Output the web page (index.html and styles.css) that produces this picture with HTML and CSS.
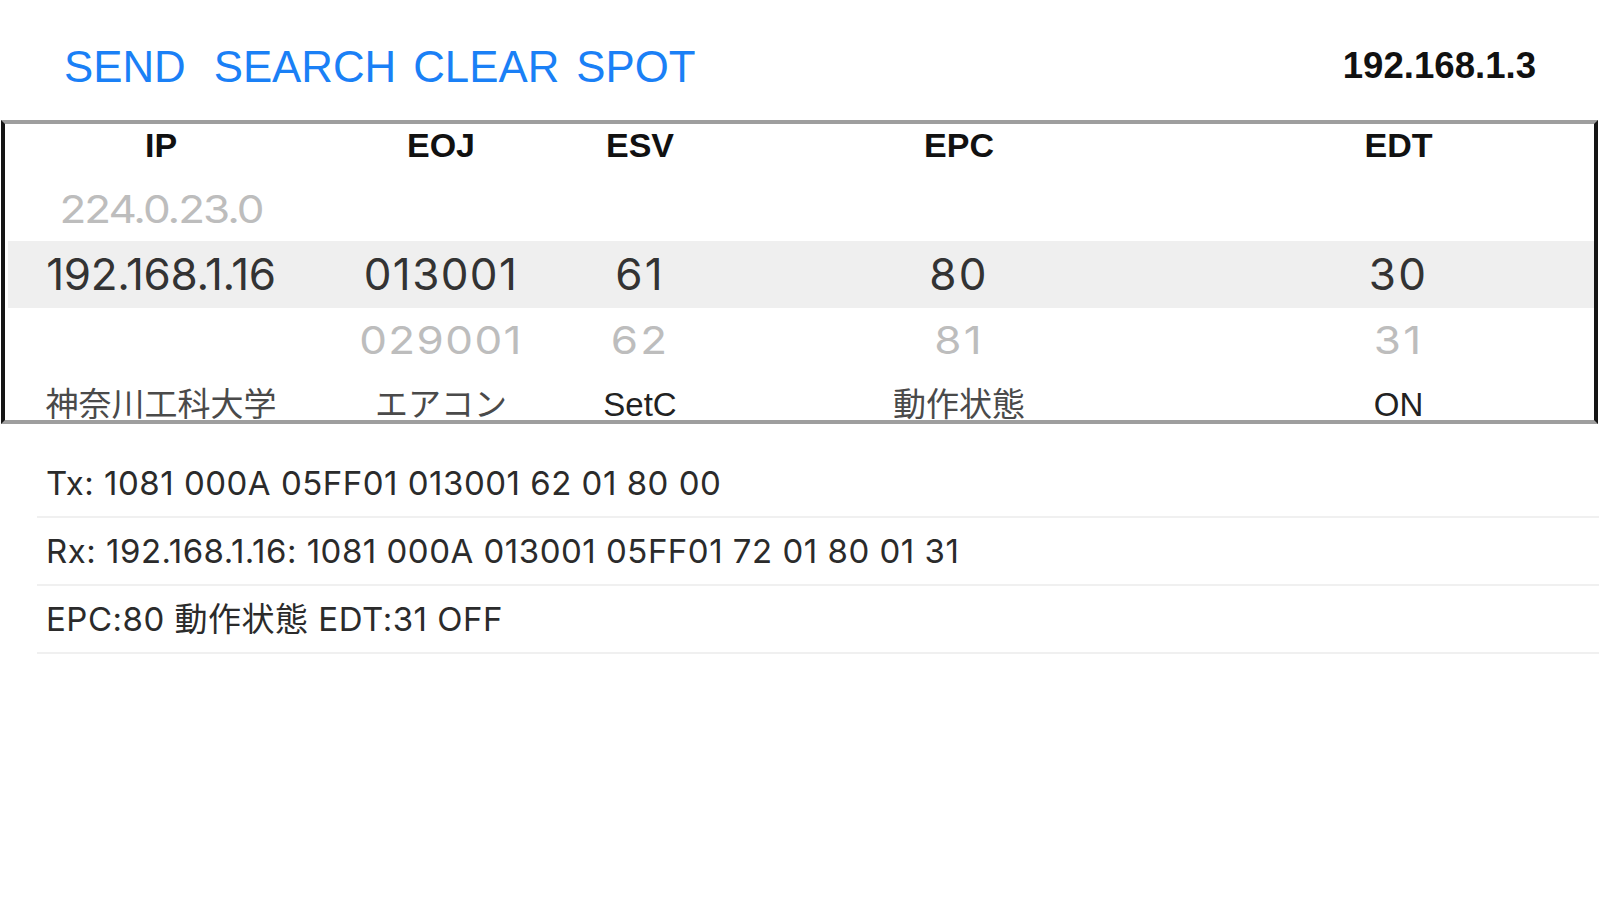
FILE: index.html
```html
<!DOCTYPE html>
<html lang="ja">
<head>
<meta charset="utf-8">
<title>ECHONET Lite Controller</title>
<link rel="stylesheet" href="styles.css">
</head>
<body>
<div class="app">
  <header class="toolbar">
    <nav class="actions">
      <button class="action action-send" type="button">SEND</button>
      <button class="action" type="button">SEARCH</button>
      <button class="action" type="button">CLEAR</button>
      <button class="action" type="button">SPOT</button>
    </nav>
    <div class="host">192.168.1.3</div>
  </header>

  <section class="picker">
    <div class="prow head">
      <div class="cell">IP</div>
      <div class="cell">EOJ</div>
      <div class="cell">ESV</div>
      <div class="cell">EPC</div>
      <div class="cell">EDT</div>
    </div>
    <div class="prow dim">
      <div class="cell ip"><span class="val">224.0.23.0</span></div>
      <div class="cell"></div>
      <div class="cell"></div>
      <div class="cell"></div>
      <div class="cell"></div>
    </div>
    <div class="prow sel">
      <div class="cell ip"><span class="val">192.168.1.16</span></div>
      <div class="cell eoj"><span class="val">013001</span></div>
      <div class="cell num"><span class="val">61</span></div>
      <div class="cell num"><span class="val">80</span></div>
      <div class="cell num"><span class="val">30</span></div>
    </div>
    <div class="prow dim">
      <div class="cell"></div>
      <div class="cell eoj"><span class="val">029001</span></div>
      <div class="cell num"><span class="val">62</span></div>
      <div class="cell num"><span class="val">81</span></div>
      <div class="cell num"><span class="val">31</span></div>
    </div>
    <div class="prow labels">
      <div class="cell cjk">神奈川工科大学</div>
      <div class="cell cjk">エアコン</div>
      <div class="cell">SetC</div>
      <div class="cell cjk">動作状態</div>
      <div class="cell">ON</div>
    </div>
  </section>

  <ul class="log">
    <li class="log-row">Tx: 1081 000A 05FF01 013001 62 01 80 00</li>
    <li class="log-row">Rx: 192.168.1.16: 1081 000A 013001 05FF01 72 01 80 01 31</li>
    <li class="log-row">EPC:80 動作状態 EDT:31 OFF</li>
  </ul>
</div>
</body>
</html>
```

FILE: styles.css
```css
* {
  box-sizing: border-box;
}

html, body {
  margin: 0;
  padding: 0;
  background: #ffffff;
}

body {
  font-family: "Liberation Sans", "Noto Sans CJK JP", sans-serif;
  color: #222;
  width: 1599px;
  height: 900px;
  overflow: hidden;
}

/* ---------- toolbar ---------- */
.toolbar {
  height: 120px;
  padding: 13px 63px 0 64px;
  display: flex;
  align-items: center;
  justify-content: space-between;
}

.actions {
  display: flex;
  align-items: center;
}

.action {
  border: 0;
  background: none;
  padding: 0;
  margin: 0 17px 0 0;
  font-family: "Liberation Sans", sans-serif;
  font-size: 43.8px;
  line-height: 1;
  color: #1a80f6;
  cursor: pointer;
}

.action-send {
  margin-right: 28px;
}

.host {
  font-size: 36.6px;
  font-weight: bold;
  color: #111;
  line-height: 1;
}

/* ---------- picker box ---------- */
.picker {
  margin: 0 1px;
  border-top: 4px solid #9e9e9e;
  border-bottom: 4px solid #9e9e9e;
  border-left: 4px solid #151515;
  border-right: 4px solid #151515;
}

.prow {
  display: grid;
  grid-template-columns: 312px 248px 150px 488px 1fr;
  text-align: center;
  white-space: nowrap;
}

.head {
  height: 53px;
  line-height: 43px;
  font-size: 34px;
  font-weight: bold;
  color: #111;
}

.dim,
.sel {
  font-family: Inter, "Liberation Sans", sans-serif;
  font-size: 44px;
}

.dim {
  height: 64px;
  line-height: 64px;
  color: #bdbdbd;
}

.sel {
  height: 67px;
  line-height: 67px;
  color: #333;
  background: linear-gradient(to right, transparent 3px, #efefef 3px);
}

.val {
  display: inline-block;
}

.dim .val {
  transform: scaleY(0.88);
}

.sel .ip .val {
  letter-spacing: -0.3px;
}

.dim .ip .val {
  letter-spacing: -2px;
}

.eoj .val {
  letter-spacing: 1.4px;
}

.num .val {
  letter-spacing: 2.2px;
}

.labels {
  height: 48px;
  padding-top: 16px;
  font-size: 33px;
  line-height: 1;
  color: #222;
}

.labels .cjk {
  color: #4a4a4a;
}

/* ---------- log ---------- */
.log {
  list-style: none;
  margin: 26px 0 0 37px;
  padding: 0;
}

.log-row {
  height: 68px;
  line-height: 66px;
  padding-left: 9px;
  border-bottom: 2px solid #f0f0f0;
  font-family: Inter, "Liberation Sans", "Noto Sans CJK JP", sans-serif;
  font-size: 33px;
  letter-spacing: 0.5px;
  color: #2b2b2b;
  white-space: nowrap;
}
```
